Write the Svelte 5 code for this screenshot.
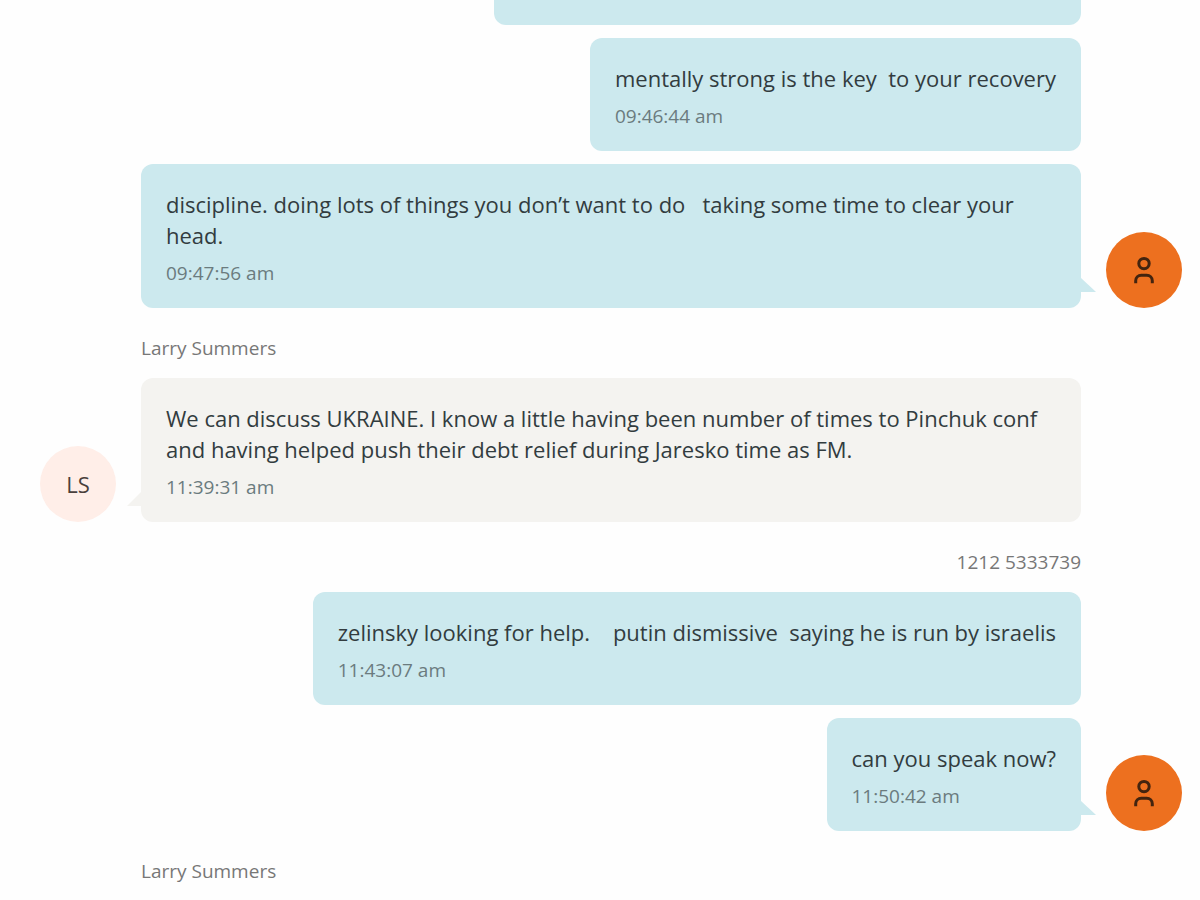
<script lang="ts">
	type Message = { text: string; time: string };
	type Group = { sender: string; mine: boolean; messages: Message[] };

	const groups: Group[] = [
		{
			sender: '',
			mine: true,
			messages: [
				{ text: 'mentally strong is the key  to your recovery', time: '09:46:44 am' },
				{
					text: 'discipline. doing lots of things you don’t want to do   taking some time to clear your head.',
					time: '09:47:56 am'
				}
			]
		},
		{
			sender: 'Larry Summers',
			mine: false,
			messages: [
				{
					text: 'We can discuss UKRAINE. I know a little having been number of times to Pinchuk conf and having helped push their debt relief during Jaresko time as FM.',
					time: '11:39:31 am'
				}
			]
		},
		{
			sender: '1212 5333739',
			mine: true,
			messages: [
				{
					text: 'zelinsky looking for help.    putin dismissive  saying he is run by israelis',
					time: '11:43:07 am'
				},
				{ text: 'can you speak now?', time: '11:50:42 am' }
			]
		},
		{ sender: 'Larry Summers', mine: false, messages: [] }
	];

	function initials(name: string) {
		return name
			.split(' ')
			.map((part) => part[0])
			.join('');
	}
</script>

<main class="chat">
	{#each groups as group, i}
		<section class="group" class:mine={group.mine}>
			{#if group.sender}
				<h2 class="sender">{group.sender}</h2>
			{/if}

			<div class="messages">
				{#if i === 0}
					<!-- end of the message scrolled off the top -->
					<div class="bubble cut"></div>
				{/if}
				{#each group.messages as message, j}
					<div class="bubble" class:tail={j === group.messages.length - 1}>
						<p class="text">{message.text}</p>
						<time class="time">{message.time}</time>
					</div>
				{/each}
			</div>

			{#if group.messages.length}
				<div class="avatar">
					{#if group.mine}
						<svg width="24" height="32" viewBox="0 0 24 32" fill="none" aria-hidden="true">
							<circle cx="12" cy="9.6" r="5.2" />
							<path d="M3.7 29.2v-2.4a5.6 5.6 0 0 1 5.6-5.6h5.4a5.6 5.6 0 0 1 5.6 5.6v2.4" />
						</svg>
					{:else}
						{initials(group.sender)}
					{/if}
				</div>
			{/if}
		</section>
	{/each}
</main>

<style>
	:global(body) {
		margin: 0;
		background: #fefefe;
		overflow: hidden;
	}

	.chat {
		display: flex;
		flex-direction: column;
		gap: 27px;
		padding: 0 18px 0 40px;
		font-family: 'Open Sans', sans-serif;
		color: #323c3f;
	}

	.group {
		display: grid;
		grid-template-columns: 76px 1fr 76px;
		column-gap: 25px;
		row-gap: 17px;
	}

	.sender {
		grid-column: 2;
		margin: 0;
		font-size: 19px;
		font-weight: 400;
		line-height: 26px;
		color: #777777;
	}

	.mine .sender {
		text-align: right;
	}

	.messages {
		grid-column: 2;
		display: flex;
		flex-direction: column;
		align-items: flex-start;
		gap: 13px;
	}

	.mine .messages {
		align-items: flex-end;
	}

	.bubble {
		position: relative;
		box-sizing: border-box;
		padding: 25px 25px 22px;
		border-radius: 12px;
		background: #f4f3f0;
	}

	.mine .bubble {
		background: #cce9ee;
	}

	.bubble.cut {
		width: 62.5%;
		height: 25px;
		padding: 0;
		border-radius: 0 0 12px 12px;
	}

	.tail::after {
		content: '';
		position: absolute;
		bottom: 16px;
		left: -14px;
		width: 15px;
		height: 15px;
		background: inherit;
		clip-path: polygon(100% 0, 100% 100%, 0 100%);
	}

	.mine .tail::after {
		left: auto;
		right: -15px;
		width: 16px;
		clip-path: polygon(0 0, 100% 100%, 0 100%);
	}

	.text {
		margin: 0 0 9px;
		font-size: 22px;
		line-height: 31px;
		white-space: pre-wrap;
	}

	.time {
		display: block;
		font-size: 19px;
		line-height: 26px;
		color: #6b7b7e;
	}

	.avatar {
		grid-column: 1;
		grid-row: 2;
		align-self: end;
		display: flex;
		align-items: center;
		justify-content: center;
		width: 76px;
		height: 76px;
		border-radius: 50%;
		background: #ffeee8;
		font-size: 22px;
		color: #4a3f3c;
	}

	.mine .avatar {
		grid-column: 3;
		background: #ed701f;
	}

	.group:first-child .avatar {
		grid-row: 1;
	}

	.avatar svg {
		stroke: #43240f;
		stroke-width: 3;
	}
</style>
